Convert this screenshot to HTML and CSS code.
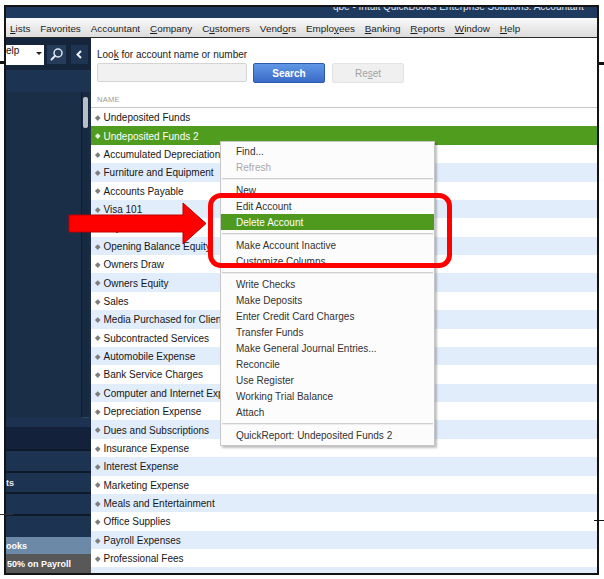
FILE: index.html
```html
<!DOCTYPE html>
<html>
<head>
<meta charset="utf-8">
<title>QuickBooks Chart of Accounts</title>
<link rel="stylesheet" href="styles.css">
</head>
<body>
<div class="stage">
  <div class="frame">
    <div class="titlebar"><span class="title">qbe - Intuit QuickBooks Enterprise Solutions: Accountant</span></div>
    <nav class="menubar">
      <span><u>L</u>ists</span>
      <span>Favorites</span>
      <span>Accountant</span>
      <span><u>C</u>ompany</span>
      <span>C<u>u</u>stomers</span>
      <span>Vend<u>o</u>rs</span>
      <span>Emplo<u>y</u>ees</span>
      <span><u>B</u>anking</span>
      <span><u>R</u>eports</span>
      <span><u>W</u>indow</span>
      <span><u>H</u>elp</span>
    </nav>
    <div class="main">
      <aside class="sidebar">
        <div class="sb-search">
          <div class="sb-input"><span>elp</span><i class="caret"></i></div>
          <div class="sb-btn sb-find">
            <svg width="19" height="19" viewBox="0 0 19 19"><circle cx="11" cy="8" r="4" fill="none" stroke="#dfe6ee" stroke-width="1.5"/><line x1="8.2" y1="10.8" x2="4.5" y2="14.5" stroke="#dfe6ee" stroke-width="2" stroke-linecap="round"/></svg>
          </div>
          <div class="sb-btn sb-collapse">
            <svg width="17" height="19" viewBox="0 0 17 19"><polyline points="10,6 6.5,9.5 10,13" fill="none" stroke="#eef2f6" stroke-width="2"/></svg>
          </div>
        </div>
        <div class="sb-band"></div>
        <div class="sb-nav"><div class="sb-track"><div class="sb-thumb"></div></div></div>
        <div class="sb-gap"></div>
        <div class="sb-dark"></div>
        <div class="sb-row h22"></div>
        <div class="sb-row h21">ts</div>
        <div class="sb-row h22"></div>
        <div class="sb-row h23"></div>
        <div class="sb-blue">ooks</div>
        <div class="sb-gray">50% on Payroll</div>
      </aside>
      <section class="content">
        <div class="search">
          <div class="search-label">Loo<u>k</u> for account name or number</div>
          <div class="search-row">
            <div class="search-input"></div>
            <div class="btn btn-search">Search</div>
            <div class="btn btn-reset">Re<u>s</u>et</div>
          </div>
        </div>
        <div class="list-head">NAME</div>
        <div class="rows">
          <div class="row"><i class="dot"></i>Undeposited Funds</div>
          <div class="row sel"><i class="dot"></i>Undeposited Funds 2</div>
          <div class="row"><i class="dot"></i>Accumulated Depreciation</div>
          <div class="row alt"><i class="dot"></i>Furniture and Equipment</div>
          <div class="row"><i class="dot"></i>Accounts Payable</div>
          <div class="row alt"><i class="dot"></i>Visa 101</div>
          <div class="row"><i class="dot"></i>Payroll Liabilities</div>
          <div class="row alt"><i class="dot"></i>Opening Balance Equity</div>
          <div class="row"><i class="dot"></i>Owners Draw</div>
          <div class="row alt"><i class="dot"></i>Owners Equity</div>
          <div class="row"><i class="dot"></i>Sales</div>
          <div class="row alt"><i class="dot"></i>Media Purchased for Clients</div>
          <div class="row"><i class="dot"></i>Subcontracted Services</div>
          <div class="row alt"><i class="dot"></i>Automobile Expense</div>
          <div class="row"><i class="dot"></i>Bank Service Charges</div>
          <div class="row alt"><i class="dot"></i>Computer and Internet Expenses</div>
          <div class="row"><i class="dot"></i>Depreciation Expense</div>
          <div class="row alt"><i class="dot"></i>Dues and Subscriptions</div>
          <div class="row"><i class="dot"></i>Insurance Expense</div>
          <div class="row alt"><i class="dot"></i>Interest Expense</div>
          <div class="row"><i class="dot"></i>Marketing Expense</div>
          <div class="row alt"><i class="dot"></i>Meals and Entertainment</div>
          <div class="row"><i class="dot"></i>Office Supplies</div>
          <div class="row alt"><i class="dot"></i>Payroll Expenses</div>
          <div class="row"><i class="dot"></i>Professional Fees</div>
          <div class="row alt"></div>
        </div>
      </section>
    </div>
  </div>

  <div class="ctx">
    <div class="ctx-item">Find...</div>
    <div class="ctx-item dis">Refresh</div>
    <div class="ctx-sep"></div>
    <div class="ctx-item">New</div>
    <div class="ctx-item">Edit Account</div>
    <div class="ctx-item hl">Delete Account</div>
    <div class="ctx-sep"></div>
    <div class="ctx-item">Make Account Inactive</div>
    <div class="ctx-item">Customize Columns...</div>
    <div class="ctx-sep"></div>
    <div class="ctx-item">Write Checks</div>
    <div class="ctx-item">Make Deposits</div>
    <div class="ctx-item">Enter Credit Card Charges</div>
    <div class="ctx-item">Transfer Funds</div>
    <div class="ctx-item">Make General Journal Entries...</div>
    <div class="ctx-item">Reconcile</div>
    <div class="ctx-item">Use Register</div>
    <div class="ctx-item">Working Trial Balance</div>
    <div class="ctx-item">Attach</div>
    <div class="ctx-sep"></div>
    <div class="ctx-item">QuickReport: Undeposited Funds 2</div>
  </div>

  <div class="callout"></div>
  <svg class="arrow" width="140" height="46" viewBox="0 0 140 46">
    <polygon points="1,14 115,14 115,2 138,22.5 115,43 115,31 1,31" fill="#ff0000" stroke="#b80000" stroke-width="1"/>
  </svg>

  <i class="tick t1"></i>
  <i class="tick t2"></i>
  <i class="tick t3"></i>
  <i class="tick t4"></i>
</div>
</body>
</html>
```
FILE: styles.css
```css
* { box-sizing: border-box; margin: 0; padding: 0; }
body {
  margin: 0;
  background: #fff;
  font-family: "Liberation Sans", Arial, sans-serif;
  width: 604px;
  height: 579px;
  overflow: hidden;
}
.stage {
  position: relative;
  width: 604px;
  height: 579px;
  padding: 5px 0 0 4px;
}
.frame {
  width: 595px;
  height: 570px;
  border: 2px solid #141414;
  display: flex;
  flex-direction: column;
  overflow: hidden;
  background: #fff;
}
.titlebar {
  height: 11px;
  flex: none;
  background: #1e3a5e;
  overflow: hidden;
  padding-left: 327px;
}
.title {
  display: block;
  font-size: 10px;
  line-height: 10px;
  margin-top: -5px;
  color: #e2e8f0;
  white-space: nowrap;
}
.menubar {
  height: 20px;
  flex: none;
  background: linear-gradient(#f9f9f9, #dcdcdc);
  border-bottom: 1px solid #2a2a2a;
  display: flex;
  align-items: center;
  gap: 9.9px;
  padding: 1px 0 0 4px;
  font-size: 9.9px;
  color: #1e1e1e;
  white-space: nowrap;
}
.main {
  flex: 1;
  display: flex;
  min-height: 0;
}

/* sidebar */
.sidebar {
  width: 85px;
  flex: none;
  display: flex;
  flex-direction: column;
  background: #1b2f4a;
  color: #e8edf3;
  font-size: 9px;
  font-weight: bold;
}
.sb-search {
  height: 32px;
  flex: none;
  background: #15263c;
  display: flex;
  align-items: flex-start;
  padding-top: 7px;
}
.sb-input {
  width: 38px;
  height: 20px;
  background: #fff;
  display: flex;
  align-items: flex-start;
  font-weight: normal;
  font-size: 10px;
  line-height: 12px;
  color: #111;
}
.caret {
  margin: 7px 2px 0 auto;
  width: 0;
  height: 0;
  border-left: 3px solid transparent;
  border-right: 3px solid transparent;
  border-top: 3px solid #222;
}
.sb-btn { height: 19px; }
.sb-find {
  margin-left: 3px;
  width: 19px;
  background: #253c5b;
}
.sb-collapse {
  margin-left: 5px;
  width: 17px;
  background: #1f3452;
}
.sb-btn svg { display: block; }
.sb-band { height: 22px; flex: none; background: #1c3352; }
.sb-nav {
  height: 326px;
  flex: none;
  display: flex;
  justify-content: flex-end;
  padding-right: 2px;
  background: #1b2e48;
}
.sb-track {
  width: 8px;
  border-left: 1px solid #0f1c2d;
  border-bottom: 1px solid #2e4563;
  background: #172940;
  padding: 5px 1px 0 1px;
}
.sb-thumb {
  height: 31px;
  background: #b7bec7;
  border-radius: 2px;
}
.sb-gap { height: 9px; flex: none; background: #1c3250; }
.sb-dark { height: 22px; flex: none; background: #13223a; }
.sb-row {
  flex: none;
  border-top: 2px solid #0e192a;
  background: #1c3352;
  display: flex;
  align-items: center;
  white-space: nowrap;
}
.h21 { height: 21px; }
.h22 { height: 22px; }
.h23 { height: 23px; }
.sb-blue {
  height: 17px;
  flex: none;
  background: #6c89a8;
  display: flex;
  align-items: center;
  color: #fff;
}
.sb-gray {
  height: 19px;
  flex: none;
  background: #585858;
  display: flex;
  align-items: center;
  padding-left: 1px;
  color: #fff;
  white-space: nowrap;
}

/* content */
.content {
  flex: 1;
  min-width: 0;
  display: flex;
  flex-direction: column;
  background: #fff;
  font-size: 10px;
  color: #1e1e1e;
}
.search {
  height: 45px;
  flex: none;
  padding: 11px 0 0 6px;
}
.search-label { line-height: 12px; color: #222; }
.search-row {
  display: flex;
  align-items: flex-start;
  margin-top: 2px;
  height: 20px;
}
.search-input {
  width: 150px;
  height: 19px;
  background: #f1f1f1;
  border: 1px solid #d4d4d4;
  border-radius: 2px;
}
.btn {
  width: 72px;
  height: 20px;
  border-radius: 2px;
  display: flex;
  align-items: center;
  justify-content: center;
}
.btn-search {
  margin-left: 6px;
  border: 1px solid #2c5cae;
  background: linear-gradient(#6097e5, #3a6bc8);
  color: #fff;
  font-weight: bold;
}
.btn-reset {
  margin-left: 7px;
  border: 1px solid #e2e2e2;
  background: #f0f0f0;
  color: #a2a2a2;
}
.list-head {
  height: 25px;
  flex: none;
  padding: 12px 0 0 6px;
  border-bottom: 1px solid #c9c9c9;
  font-size: 7.5px;
  line-height: 10px;
  color: #9a9a9a;
  letter-spacing: 0.3px;
}
.rows { flex: 1; min-height: 0; overflow: hidden; }
.row {
  height: 18.375px;
  display: flex;
  align-items: center;
  padding: 1px 0 0 5px;
  white-space: nowrap;
  color: #161616;
  background: #fff;
}
.row.alt { background: #e2edfc; }
.row.sel { background: #509c1f; color: #fff; }
.dot {
  width: 3.5px;
  height: 3.5px;
  background: #7d7d7d;
  transform: rotate(45deg);
  margin-right: 4px;
  flex: none;
}
.row.sel .dot { background: #e8f3de; }

/* context menu */
.ctx {
  position: absolute;
  left: 220px;
  top: 141px;
  width: 215px;
  background: #fcfcfc;
  border: 1px solid #c6c6c6;
  box-shadow: 2px 2px 2px rgba(0, 0, 0, 0.25);
  padding: 1px 0 2px;
  font-family: "Liberation Sans", Arial, sans-serif;
  font-size: 10px;
  color: #333;
}
.ctx-item {
  height: 16px;
  line-height: 16px;
  padding: 1px 0 0 15px;
  white-space: nowrap;
}
.ctx-item.dis { color: #a8a8a8; }
.ctx-item.hl { background: #4f9a1e; color: #fff; }
.ctx-sep {
  height: 7px;
  padding: 3px 1px 0;
}
.ctx-sep::before {
  content: "";
  display: block;
  border-top: 1px solid #cfcfcf;
  border-bottom: 1px solid #ededed;
}

/* annotations */
.callout {
  position: absolute;
  left: 208px;
  top: 193px;
  width: 244px;
  height: 75px;
  border: 5px solid #ff0000;
  border-radius: 13px;
}
.arrow {
  position: absolute;
  left: 68px;
  top: 201px;
}
.tick { position: absolute; background: #111; }
.t1 { left: 0; top: 61px; width: 4px; height: 3px; }
.t2 { left: 599px; top: 62px; width: 5px; height: 3px; }
.t3 { left: 0; top: 514px; width: 13px; height: 1px; background: #333; }
.t4 { left: 594px; top: 520px; width: 10px; height: 1px; }
```
